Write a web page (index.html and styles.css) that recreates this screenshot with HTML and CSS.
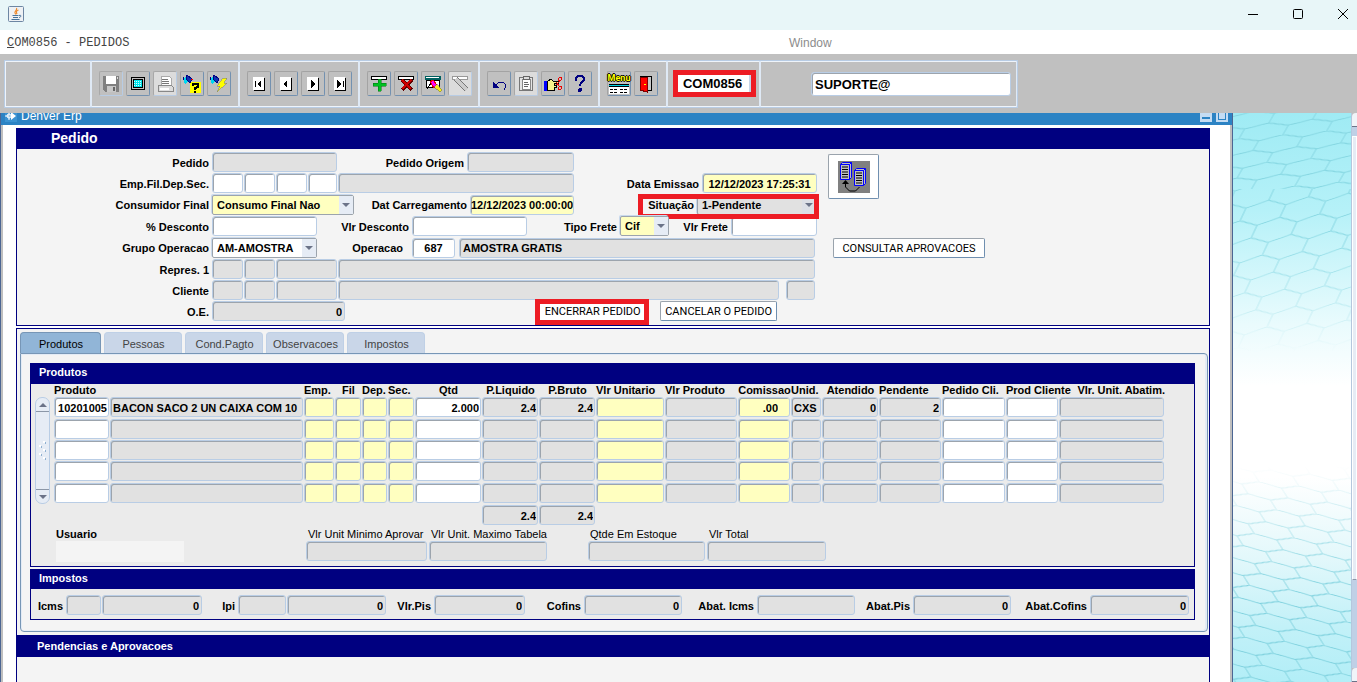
FILE: index.html
```html
<!DOCTYPE html>
<html lang="pt-BR">
<head>
  <meta charset="UTF-8">
  <meta name="viewport" content="width=device-width, initial-scale=1.0">
  <title>COM0856 - PEDIDOS</title>
  <link rel="stylesheet" href="styles.css">
</head>
<body>
  <header class="titlebar">
    <svg class="java-icon" width="16" height="16" viewBox="0 0 16 16">
      <rect x=".5" y=".5" width="15" height="15" rx="1" fill="#eef1f4" stroke="#6d86a3"/>
      <path d="M8.500 2C10 4 6 5 7 7l1 1.500M10.500 4C8 5 8 6 9 8" fill="none" stroke="#ee8a2c" stroke-width="1.200"/>
      <path d="M4.500 9.500h6M5 11.500h5M3.500 13.500h8M11 9.500c3-1 2 2 0 2" fill="none" stroke="#47739b"/>
    </svg>
    <div class="window-buttons">
      <button aria-label="Minimizar"><svg width="10" height="10"><path d="M0 5.5h10" stroke="#000"/></svg></button>
      <button aria-label="Maximizar"><svg width="10" height="10"><rect x=".5" y=".5" width="9" height="9" rx="1" fill="none" stroke="#000"/></svg></button>
      <button aria-label="Fechar"><svg width="10" height="10"><path d="M0 0l10 10M10 0L0 10" stroke="#000"/></svg></button>
    </div>
  </header>

  <nav class="menubar">
    <a class="menu-form" href="#"><u>C</u>OM0856 - PEDIDOS</a>
    <a class="menu-window" href="#">Window</a>
  </nav>

  <div class="toolbar">
    <div class="tool-strip">
      <div class="tool-group group-empty"></div>

      <div class="tool-group group-file">
        <button class="tool off" aria-label="Salvar"><svg viewBox="0 0 18 18">
          <path d="M1 1h16v16H3l-2-2z" fill="#808080"/><path d="M4 1h10v8H4z" fill="#fff"/><path d="M5 11h9v6H5z" fill="#c8c8c8"/><path d="M11 12h2v4h-2z" fill="#666"/><path d="M15 2h1v2h-1z" fill="#ddd"/>
        </svg></button>
        <button class="tool" aria-label="Tela"><svg viewBox="0 0 18 18">
          <rect x="2" y="2" width="14" height="13" rx="1" fill="#000"/><path d="M3 3h12v11H3z" fill="#c0c0c0"/><path d="M4 4h10v9H4z" fill="#000"/><path d="M5 5h8v7H5z" fill="#00e4ec"/><path d="M5 6.500h8M5 8.500h8M5 10.500h8" stroke="#d8ffff" stroke-dasharray="1 1"/>
        </svg></button>
        <button class="tool off light" aria-label="Imprimir"><svg viewBox="0 0 18 18">
          <path d="M5 1h8l2 2v7H5z" fill="#fff" stroke="#aaa"/><path d="M6 4h6M6 6h7M6 8h7" stroke="#777"/><path d="M2 10h13l2 2v4H2z" fill="#ddd" stroke="#888"/><path d="M4 13h9v2H4z" fill="#fff"/>
        </svg></button>
        <button class="tool" aria-label="Entrar consulta"><svg viewBox="0 0 18 18">
          <path d="M7 7h11v11H7z" fill="#ff0"/><path d="M0 3l3-1 3 4-4 3z" fill="#00d8f0"/><path d="M4 0l5 4-2 4-4-4zM1 2l-1 3" fill="#1030b0" stroke="#000080"/><path d="M8 5l2-1" stroke="#e00"/><path d="M10 11V9h5v3l-3 1v2M12 16v2" fill="none" stroke="#000" stroke-width="2"/>
        </svg></button>
        <button class="tool" aria-label="Executar consulta"><svg viewBox="0 0 18 18">
          <path d="M0 3l3-1 3 4-4 3z" fill="#00d8f0"/><path d="M4 0l5 4-2 4-4-4zM1 2l-1 3" fill="#1030b0" stroke="#000080"/><path d="M13 3h4l-3 5h3l-10 9 3-6H7z" fill="#ff0" stroke="#777" stroke-width=".5"/>
        </svg></button>
      </div>

      <div class="tool-group group-records">
        <button class="tool" aria-label="Primeiro"><svg viewBox="0 0 18 18">
          <path d="M4 3h11v13H4z" fill="#000"/><path d="M3 2h11v13H3z" fill="#fff"/><path d="M5 6h1v6H5zM11 5v8L7 9z"/>
        </svg></button>
        <button class="tool" aria-label="Anterior"><svg viewBox="0 0 18 18">
          <path d="M4 3h11v13H4z" fill="#000"/><path d="M3 2h11v13H3z" fill="#fff"/><path d="M10 5v8L6 9z"/>
        </svg></button>
        <button class="tool" aria-label="Proximo"><svg viewBox="0 0 18 18">
          <path d="M4 3h11v13H4z" fill="#000"/><path d="M3 2h11v13H3z" fill="#fff"/><path d="M7 5v8l4-4z"/>
        </svg></button>
        <button class="tool" aria-label="Ultimo"><svg viewBox="0 0 18 18">
          <path d="M4 3h11v13H4z" fill="#000"/><path d="M3 2h11v13H3z" fill="#fff"/><path d="M12 6h1v6h-1zM6 5v8l4-4z"/>
        </svg></button>
      </div>

      <div class="tool-group group-edit">
        <button class="tool" aria-label="Inserir"><svg viewBox="0 0 18 18">
          <path d="M1.500 1.500h15v3h-15z" fill="#fff" stroke="#000"/><path d="M8 4h3v4h5v3h-5v5H8v-5H3V8h5z" fill="#00c020" stroke="#007010" stroke-width=".5"/>
        </svg></button>
        <button class="tool" aria-label="Excluir"><svg viewBox="0 0 18 18">
          <path d="M1.500 1.500h15v3h-15z" fill="#fff" stroke="#000"/><path d="M5 5l10 10M15 5L5 15" stroke="#600000" stroke-width="4"/><path d="M5 5l9 9M14 5l-9 9" stroke="#d00000" stroke-width="2"/>
        </svg></button>
        <button class="tool" aria-label="Limpar"><svg viewBox="0 0 18 18">
          <path d="M1 1h16v4H1z" fill="#006060"/><path d="M2.500 5.500h13v7h-13z" fill="#fff" stroke="#000"/><path d="M2 2.500h13" stroke="#fff"/><path d="M6 7l3-2 4 5-3 3z" fill="#f0f" stroke="#e00"/><path d="M3 14l4-6" stroke="#000"/><path d="M10 12l3-3 5 6-2 2z" fill="#f4ee20" stroke="#555" stroke-width=".5"/>
        </svg></button>
        <button class="tool off light" aria-label="Editar"><svg viewBox="0 0 18 18">
          <path d="M1.500 1.500h15v3h-15z" fill="#fff" stroke="#999"/><path d="M5 4l11 11" stroke="#777" stroke-width="5"/><path d="M5 4l11 11" stroke="#ccc" stroke-width="3"/>
        </svg></button>
      </div>

      <div class="tool-group group-tools">
        <button class="tool" aria-label="Desfazer"><svg viewBox="0 0 18 18">
          <path d="M6 10l3-3h4l2 2v4l-1 2" fill="none" stroke="#000080"/><path d="M3 7v6h6z" fill="#000080"/>
        </svg></button>
        <button class="tool off light" aria-label="Colar"><svg viewBox="0 0 18 18">
          <rect x="2.500" y="2.500" width="13" height="13" rx="1" fill="#e4e4e4" stroke="#777"/><path d="M5 4h8v10H5z" fill="#fff" stroke="#888"/><path d="M6 1h6v3H6z" fill="#ddd" stroke="#666"/><path d="M7 7h4M7 9h5M7 11h4" stroke="#666"/>
        </svg></button>
        <button class="tool" aria-label="Recortar"><svg viewBox="0 0 18 18">
          <path d="M0 6h3v10H0z" fill="#00f"/><path d="M3 7l4-3 2 2h5v2h-4v2h2v2h-2v3H3z" fill="#f8f08c" stroke="#000"/><path d="M12 10l4-4M12 7l4 5" stroke="#e00"/><circle cx="16" cy="4" r="1.500" fill="none" stroke="#e00"/><circle cx="16" cy="13" r="1.500" fill="none" stroke="#e00"/>
        </svg></button>
        <button class="tool" aria-label="Ajuda"><svg viewBox="0 0 18 18">
          <path d="M5 6V4c0-4 8-4 8 0 0 3-4 3-4 7" fill="none" stroke="#000080" stroke-width="2"/><circle cx="9" cy="15" r="2" fill="#000080"/>
        </svg></button>
      </div>

      <div class="tool-group group-exit">
        <button class="tool menu-tool" aria-label="Menu">
          <span class="menu-word">Menu</span>
          <svg viewBox="0 0 20 10"><path d="M0 0h20v10H0z" fill="#fff"/><path d="M0 .5h20" stroke="#000"/><path d="M0 1.500h20" stroke="#00d0e0"/><path d="M0 2.500h20" stroke="#000"/><path d="M1 5.500h7M11 5.500h7M1 8.500h7M11 8.500h7" stroke="#000" stroke-dasharray="3 1"/></svg>
        </button>
        <button class="tool" aria-label="Sair"><svg viewBox="0 0 18 18">
          <path d="M3.500 1.500h11v14h-11z" fill="#c8c8c8" stroke="#000"/><path d="M3 2h7v15l-7-2z" fill="#f00" stroke="#800000"/><path d="M7 9h2v1H7z" fill="#ff0"/>
        </svg></button>
      </div>

      <div class="tool-group group-code">
        <span class="marked"><input class="code-box" aria-label="Programa" value="COM0856"></span>
      </div>
      <div class="tool-group group-user">
        <input class="field user-box" aria-label="Usuario conectado" value="SUPORTE@">
      </div>
    </div>
  </div>

  <main class="workspace">
    <div class="mdi-window">
      <div class="mdi-title">
        <svg class="mdi-icon" width="12" height="12" viewBox="0 0 12 12"><path d="M6 2l5 4-5 4z" fill="#fff"/><circle cx="4" cy="6" r="2" fill="none" stroke="#fff"/><path d="M0 6h4M4 2v8" stroke="#fff"/></svg>
        <span>Denver Erp</span>
        <div class="mdi-buttons">
          <button aria-label="Minimizar janela"><svg width="12" height="12"><path d="M2 8h8" stroke="#2c83c4" stroke-width="2"/></svg></button>
          <button aria-label="Restaurar janela"><svg width="12" height="12"><rect x="2.500" y="1.500" width="7" height="8" fill="none" stroke="#2c83c4"/></svg></button>
        </div>
      </div>

      <div class="mdi-content">
        <section class="panel order">
          <h1>Pedido</h1>
          <div class="order-body">
            <form class="order-form">
              <div class="row row-pedido">
                <label for="pedido">Pedido</label>
                <input class="field off" id="pedido">
                <label for="origem">Pedido Origem</label>
                <input class="field off" id="origem">
              </div>
              <div class="row row-empresa">
                <label for="emp">Emp.Fil.Dep.Sec.</label>
                <input class="field" id="emp">
                <input class="field" aria-label="Fil">
                <input class="field" aria-label="Dep">
                <input class="field" aria-label="Sec">
                <input class="field off" aria-label="Nome da empresa">
                <label for="emissao">Data Emissao</label>
                <input class="field required center" id="emissao" value="12/12/2023 17:25:31">
              </div>
              <div class="row row-consumidor">
                <label for="consumidor">Consumidor Final</label>
                <span class="select required"><select id="consumidor"><option>Consumo Final Nao</option></select></span>
                <label for="carregamento">Dat Carregamento</label>
                <input class="field required center" id="carregamento" value="12/12/2023 00:00:00">
                <div class="situacao">
                  <label for="situacao">Situação</label>
                  <span class="select off"><select id="situacao"><option>1-Pendente</option></select></span>
                </div>
              </div>
              <div class="row row-desconto">
                <label for="desconto">% Desconto</label>
                <input class="field" id="desconto">
                <label for="vlr-desconto">Vlr Desconto</label>
                <input class="field" id="vlr-desconto">
                <label for="tipo-frete">Tipo Frete</label>
                <span class="select required"><select id="tipo-frete"><option>Cif</option></select></span>
                <label for="vlr-frete">Vlr Frete</label>
                <input class="field" id="vlr-frete">
              </div>
              <div class="row row-operacao">
                <label for="grupo">Grupo Operacao</label>
                <span class="select"><select id="grupo"><option>AM-AMOSTRA</option></select></span>
                <label for="operacao">Operacao</label>
                <input class="field center" id="operacao" value="687">
                <input class="field off" aria-label="Descricao da operacao" value="AMOSTRA GRATIS">
              </div>
              <div class="row row-repres">
                <label for="repres">Repres. 1</label>
                <input class="field off" id="repres">
                <input class="field off" aria-label="Repres. fil">
                <input class="field off" aria-label="Repres. codigo">
                <input class="field off" aria-label="Repres. nome">
              </div>
              <div class="row row-cliente">
                <label for="cliente">Cliente</label>
                <input class="field off" id="cliente">
                <input class="field off" aria-label="Cliente fil">
                <input class="field off" aria-label="Cliente codigo">
                <input class="field off" aria-label="Cliente nome">
                <input class="field off uf" aria-label="UF">
              </div>
              <div class="row row-oe">
                <label for="oe">O.E.</label>
                <input class="field off num" id="oe" value="0">
                <div class="order-buttons">
                  <span class="marked-button"><button type="button" class="btn">ENCERRAR PEDIDO</button></span>
                  <button type="button" class="btn">CANCELAR O PEDIDO</button>
                </div>
              </div>
            </form>

            <div class="order-actions">
              <button class="btn copy-btn" aria-label="Copiar pedido">
                <svg width="32" height="32" viewBox="0 0 32 32">
                  <path d="M0 0h32v32H0z" fill="#808080"/>
                  <path d="M2.500 3.500l2-2h9v15l-2 2h-9z" fill="#c0c0c0" stroke="#00f"/>
                  <path d="M11.500 3.500v15M11.500 3.500l2-2M2.500 3.500h9" stroke="#00f"/>
                  <path d="M4 6h6M4 8.500h6M4 11h6M4 13.500h6M4 16h6" stroke="#000"/>
                  <path d="M16.500 9.500l2-2h9v15l-2 2h-9z" fill="#c0c0c0" stroke="#00f"/>
                  <path d="M25.500 9.500v15M25.500 9.500l2-2M16.500 9.500h9" stroke="#00f"/>
                  <path d="M18 12h6M18 14.500h6M18 17h6M18 19.500h6M18 22h6" stroke="#000"/>
                  <path d="M7.500 21v5l4 4h6l4-4" fill="none" stroke="#000"/>
                  <path d="M4 23l3.500-4 3.500 4z"/>
                </svg>
              </button>
              <button class="btn consult-btn">CONSULTAR APROVACOES</button>
            </div>
          </div>
        </section>

        <section class="panel details">
          <div class="tabs" role="tablist">
            <button class="tab active" role="tab">Produtos</button>
            <button class="tab" role="tab">Pessoas</button>
            <button class="tab" role="tab">Cond.Pagto</button>
            <button class="tab" role="tab">Observacoes</button>
            <button class="tab" role="tab">Impostos</button>
          </div>

          <div class="tab-pane">
            <section class="panel products">
              <h2>Produtos</h2>
              <div class="grid-area">
                <div class="scroller">
                  <span class="arrow up"></span>
                  <svg width="9" height="20"><path d="M5 1h2M1 5h2M5 9h2M1 13h2M5 17h2" stroke="#fff" stroke-width="2"/><path d="M7 2h1M3 6h1M7 10h1M3 14h1M7 18h1" stroke="#8fb0d0" stroke-width="2"/></svg>
                  <span class="arrow down"></span>
                </div>
                <table class="items">
                  <colgroup>
                    <col class="w-produto"><col class="w-descricao"><col class="w-emp"><col class="w-fil"><col class="w-dep"><col class="w-fil">
                    <col class="w-qtd"><col class="w-peso"><col class="w-peso"><col class="w-unitario"><col class="w-valor"><col class="w-comissao">
                    <col class="w-emp"><col class="w-peso"><col class="w-pendente"><col class="w-pedcli"><col class="w-comissao"><col class="w-abatim">
                  </colgroup>
                  <thead>
                    <tr>
                      <th>Produto</th><th></th><th>Emp.</th><th class="center">Fil</th><th>Dep.</th><th>Sec.</th>
                      <th class="center">Qtd</th><th class="center">P.Liquido</th><th class="center">P.Bruto</th>
                      <th>Vlr Unitario</th><th>Vlr Produto</th><th class="center">Comissao</th><th>Unid.</th>
                      <th class="center">Atendido</th><th>Pendente</th><th>Pedido Cli.</th><th>Prod Cliente</th><th class="end">Vlr. Unit. Abatim.</th>
                    </tr>
                  </thead>
                  <tbody id="items"></tbody>
                  <tfoot>
                    <tr>
                      <td colspan="7"></td>
                      <td><input class="field off num" aria-label="Total P.Liquido" value="2.4"></td>
                      <td><input class="field off num" aria-label="Total P.Bruto" value="2.4"></td>
                      <td colspan="9"></td>
                    </tr>
                  </tfoot>
                </table>
              </div>

              <div class="summary">
                <div><strong>Usuario</strong><output class="user-name"></output></div>
                <div><label for="minimo">Vlr Unit Minimo Aprovar</label><input class="field off" id="minimo"></div>
                <div><label for="maximo">Vlr Unit. Maximo Tabela</label><input class="field off" id="maximo"></div>
                <div class="stock"><label for="estoque">Qtde Em Estoque</label><input class="field off" id="estoque"></div>
                <div><label for="total">Vlr Total</label><input class="field off" id="total"></div>
              </div>
            </section>

            <section class="panel taxes">
              <h2>Impostos</h2>
              <div class="tax-row">
                <label for="icms">Icms</label>
                <input class="field off" id="icms">
                <input class="field off num" aria-label="Valor Icms" value="0">
                <label for="ipi">Ipi</label>
                <input class="field off" id="ipi">
                <input class="field off num" aria-label="Valor Ipi" value="0">
                <label for="pis">Vlr.Pis</label>
                <input class="field off num" id="pis" value="0">
                <label for="cofins">Cofins</label>
                <input class="field off num" id="cofins" value="0">
                <label for="abat-icms">Abat. Icms</label>
                <input class="field off num" id="abat-icms">
                <label for="abat-pis">Abat.Pis</label>
                <input class="field off num" id="abat-pis" value="0">
                <label for="abat-cofins">Abat.Cofins</label>
                <input class="field off num" id="abat-cofins" value="0">
              </div>
            </section>
          </div>

          <h2 class="pending">Pendencias e Aprovacoes</h2>
        </section>
      </div>
    </div>

    <svg class="wallpaper" viewBox="0 0 118 569" preserveAspectRatio="none">
      <defs>
        <linearGradient id="sky" x1="0" y1="0" x2="0" y2="1">
          <stop offset="0" stop-color="#9febf4"/>
          <stop offset=".17" stop-color="#b5f1f8"/>
          <stop offset=".37" stop-color="#e9fbfd"/>
          <stop offset=".48" stop-color="#fff"/>
          <stop offset=".64" stop-color="#fff"/>
          <stop offset=".78" stop-color="#e3f8fb"/>
          <stop offset=".9" stop-color="#c3f1f8"/>
          <stop offset="1" stop-color="#b2eef7"/>
        </linearGradient>
        <linearGradient id="fade" x1="0" y1="0" x2="0" y2="1">
          <stop offset="0" stop-color="#fff"/>
          <stop offset=".2" stop-color="#fff"/>
          <stop offset=".42" stop-color="#000"/>
          <stop offset=".62" stop-color="#000"/>
          <stop offset=".85" stop-color="#fff"/>
          <stop offset="1" stop-color="#fff"/>
        </linearGradient>
        <mask id="fade-mask"><rect width="118" height="569" fill="url(#fade)"/></mask>
        <pattern id="hex-far" width="44" height="26" patternUnits="userSpaceOnUse" patternTransform="rotate(-5) skewX(-35)">
          <path d="M0 4L22 0L44 4M0 4v9L22 17L44 13V4M22 17v9M22 0v-1" fill="none" stroke="#85d6e1"/>
        </pattern>
        <pattern id="hex-close" width="40" height="36" patternUnits="userSpaceOnUse" patternTransform="rotate(-5) skewX(-30)">
          <path d="M0 6L20 0L40 6M0 6v12L20 24L40 18V6M20 24v12" fill="none" stroke="#85d6e1"/>
        </pattern>
        <pattern id="hex-low" width="40" height="26" patternUnits="userSpaceOnUse" patternTransform="rotate(6) skewX(38)">
          <path d="M0 4L20 0L40 4M0 4v9L20 17L40 13V4M20 17v9" fill="none" stroke="#7fd1de"/>
        </pattern>
      </defs>
      <rect width="118" height="569" fill="url(#sky)"/>
      <g mask="url(#fade-mask)">
        <rect width="118" height="76" fill="url(#hex-far)"/>
        <rect y="76" width="118" height="170" fill="url(#hex-close)"/>
        <rect y="340" width="118" height="229" fill="url(#hex-low)"/>
      </g>
    </svg>

    <div class="page-scroll">
      <span class="page-scroll-button"></span>
      <span class="page-scroll-gap"></span>
      <span class="page-scroll-thumb"></span>
      <span class="page-scroll-track"></span>
      <span class="page-scroll-button"></span>
    </div>
  </main>

  <script>
    // Item grid columns: name, style, value of the first record
    const columns = [
      ["Produto", "num", "10201005"],
      ["Descricao", "off", "BACON SACO 2 UN CAIXA COM 10"],
      ["Emp.", "required", ""],
      ["Fil", "required", ""],
      ["Dep.", "required", ""],
      ["Sec.", "required", ""],
      ["Qtd", "num", "2.000"],
      ["P.Liquido", "off num", "2.4"],
      ["P.Bruto", "off num", "2.4"],
      ["Vlr Unitario", "required", ""],
      ["Vlr Produto", "off", ""],
      ["Comissao", "required percent", ".00"],
      ["Unid.", "off", "CXS"],
      ["Atendido", "off num", "0"],
      ["Pendente", "off num", "2"],
      ["Pedido Cli.", "", ""],
      ["Prod Cliente", "", ""],
      ["Vlr. Unit. Abatim.", "off", ""]
    ];

    const body = document.getElementById("items");
    for (let i = 0; i < 5; i++) {
      const row = body.insertRow();
      columns.forEach(([name, style, value]) => {
        const input = document.createElement("input");
        input.className = "field " + style;
        input.setAttribute("aria-label", name + " " + (i + 1));
        input.value = i === 0 ? value : "";
        row.insertCell().appendChild(input);
      });
    }
  </script>
</body>
</html>
```

FILE: styles.css
```css
* {
  margin: 0;
  padding: 0;
  box-sizing: border-box;
}

body {
  display: flex;
  flex-direction: column;
  height: 100vh;
  overflow: hidden;
  background: #c0c0c0;
  color: #000;
  font-family: "Liberation Sans", Arial, sans-serif;
  font-size: 11px;
}

input, select, button {
  font: inherit;
  color: inherit;
}

button {
  border: none;
  background: none;
}

/* Window title */
.titlebar {
  display: flex;
  flex: none;
  justify-content: space-between;
  align-items: center;
  height: 30px;
  padding: 0 9px 2px 8px;
  background: #e8f6f8;
}

.window-buttons {
  display: flex;
  gap: 35px;
}

.window-buttons button,
.window-buttons svg {
  display: block;
}

.menubar {
  display: flex;
  flex: none;
  align-items: center;
  height: 24px;
  padding: 2px 0 0 7px;
  background: #fff;
}

.menubar a {
  color: #444;
  text-decoration: none;
}

.menubar .menu-form {
  width: 782px;
  font-family: "Liberation Mono", monospace;
  font-size: 12px;
}

.menubar .menu-window {
  color: #8c8c8c;
  font-size: 12px;
}

/* Toolbar */
.toolbar {
  display: flex;
  flex: none;
  height: 59px;
  padding: 6px 4px 5px;
}

.tool-strip {
  display: flex;
  border: 1px solid #b8cce4;
  box-shadow: inset 1px 1px #eef4fb, inset 0 -1px #eef4fb;
}

.tool-group {
  display: flex;
  align-items: center;
  gap: 3px;
  padding: 0 7px 1px;
  border-right: 2px solid #dfe9f5;
}

.tool-group:last-child {
  border-right-width: 1px;
}

.group-empty { width: 87px; }
.group-file { width: 148px; }
.group-records { width: 120px; }
.group-edit { width: 120px; }
.group-tools { width: 120px; }
.group-exit { width: 68px; }
.group-code { width: 93px; }
.group-user { width: 256px; padding: 0 5px 1px; justify-content: flex-end; }

.tool {
  display: flex;
  flex: none;
  flex-direction: column;
  align-items: center;
  justify-content: center;
  width: 24px;
  height: 25px;
  border: 1px solid;
  border-color: #a3a3a3 #7391b0 #7391b0 #a3a3a3;
  border-radius: 2px;
}

.tool.off {
  border-color: #a8a8a8 #b8cce4 #b8cce4 #a8a8a8;
}

.tool.light {
  background: #dcdcdc;
}

.tool svg {
  width: 18px;
  height: 18px;
  shape-rendering: crispEdges;
}

.tool.menu-tool svg {
  width: 20px;
  height: 10px;
}

.menu-word {
  height: 11px;
  color: #ff0;
  font-family: Roboto, sans-serif;
  font-size: 9px;
  font-weight: bold;
  line-height: 11px;
  text-shadow: 1px 0 #000, -1px 0 #000, 0 1px #000, 0 -1px #000;
}

.marked {
  display: flex;
  margin-left: -2px;
  border: 5px solid #ed1c24;
}

.code-box {
  width: 73px;
  height: 17px;
  padding-right: 2px;
  border: none;
  border-right: 2px solid #c5d5e8;
  background: #fff;
  font-size: 13px;
  font-weight: bold;
  text-align: center;
}

.tool-group .user-box {
  width: 200px;
  height: 24px;
  font-size: 13px;
}

/* Workspace */
.workspace {
  display: flex;
  flex: 1;
  min-height: 0;
  overflow: hidden;
}

.mdi-window {
  flex: 1;
  min-width: 0;
  margin-top: -9px;
  border-left: 1px solid #4c6693;
  border-right: 1px solid #4c6693;
  background: #fff;
}

.mdi-title {
  display: flex;
  align-items: center;
  gap: 4px;
  height: 21px;
  padding: 3px 4px 0;
  background: #2c83c4;
  color: #fff;
  font-size: 12px;
}

.mdi-icon {
  background: #3b93d2;
}

.mdi-buttons {
  display: flex;
  gap: 4px;
  margin-left: auto;
}

.mdi-buttons button,
.mdi-buttons svg {
  display: block;
}

.mdi-buttons button {
  background: #c4dcf3;
}

.mdi-content {
  padding: 3px 20px 0 13px;
  border-left: 2px solid #bfbfbf;
  border-right: 2px solid #bfbfbf;
}

/* Navy framed panels */
.panel {
  border: 1px solid #000080;
  border-top: none;
  background: #f4f4f4;
}

.panel h1,
.panel h2 {
  background: #000080;
  color: #fff;
  font-size: 11px;
  line-height: 19px;
}

.panel h1 {
  height: 21px;
  padding-left: 34px;
  font-size: 14px;
  line-height: 21px;
}

/* Fields */
.field {
  display: block;
  width: 100%;
  height: 20px;
  padding: 1px 2px 0 3px;
  border: 1px solid #b9cde5;
  border-radius: 3px;
  outline: none;
  background: #fff;
  box-shadow: inset 1px 1px #9ca4ad;
  font-weight: bold;
}

.field.off { background: #e1e1e1; }
.field.required { background: #ffffc0; }
.field.num { text-align: right; }
.center, .field.center { padding-left: 0; padding-right: 0; text-align: center; }

.select {
  position: relative;
  display: block;
  height: 20px;
  border: 1px solid #9ca4ad;
  border-radius: 2px;
  box-shadow: -1px -1px #c9d9ec;
  background: #fff;
}

.select.off { background: #e1e1e1; }
.select.required { background: #ffffc0; }

.select select {
  display: block;
  width: 100%;
  height: 100%;
  padding-left: 4px;
  border: none;
  background: none;
  appearance: none;
  font-weight: bold;
}

.select::before {
  content: "";
  position: absolute;
  top: 0;
  right: 0;
  bottom: 0;
  width: 14px;
  background: #e6ecf5;
}

.select.off::before {
  background: #dcdfe6;
}

.select::after {
  content: "";
  position: absolute;
  top: 7px;
  right: 3px;
  border: 4px solid transparent;
  border-top-color: #6b7388;
  border-bottom: none;
}

/* Order form */
.order-body {
  display: flex;
  padding: 3px 0 4px;
}

.order-form {
  display: flex;
  flex-direction: column;
  gap: 1px;
}

.row {
  display: grid;
  align-items: center;
  column-gap: 1px;
}

.row label,
.tax-row label {
  padding: 1px 2px 0 0;
  font-weight: bold;
  text-align: right;
  white-space: nowrap;
}

.row-pedido { grid-template-columns: 194px 125px 128px 107px; }
.row-empresa { grid-template-columns: 194px 31px 31px 31px 29px 236px 126px 115px; }
.row-consumidor { grid-template-columns: 194px 142px 114px 104px 242px; height: 21px; }
.row-desconto { grid-template-columns: 194px 105px 93px 115px 91px 49px 60px 86px; }
.row-operacao { grid-template-columns: 194px 105px 93px 46px 356px; height: 21px; }
.row-repres { grid-template-columns: 194px 31px 31px 61px 477px; }
.row-cliente { grid-template-columns: 194px 31px 31px 61px 441px 35px; }
.row-oe { grid-template-columns: 194px 133px 431px; }

.row .uf {
  justify-self: end;
  width: 29px;
}

#operacao {
  width: 43px;
}

.row label[for="operacao"] {
  padding-right: 8px;
}

.situacao {
  position: relative;
  display: grid;
  grid-template-columns: 121px 120px;
  align-items: center;
  column-gap: 1px;
}

/* Red callout round the order status */
.situacao::after {
  content: "";
  position: absolute;
  top: -1px;
  right: -2px;
  bottom: -4px;
  left: 63px;
  border: 5px solid #ed1c24;
  pointer-events: none;
}

.order-buttons {
  display: flex;
  justify-content: flex-end;
  gap: 13px;
}

.btn {
  height: 20px;
  padding: 0 4px;
  border: 1px solid;
  border-color: #9aa3ac #6f8fb0 #6f8fb0 #9aa3ac;
  border-radius: 2px;
  background: #fff;
  font-family: Roboto, "Liberation Sans", sans-serif;
  white-space: nowrap;
}

.marked-button {
  position: relative;
}

.marked-button .btn {
  width: 109px;
}

.marked-button::after {
  content: "";
  position: absolute;
  top: -2px;
  right: -2px;
  bottom: -4px;
  left: -3px;
  border: 5px solid #ed1c24;
  pointer-events: none;
}

.order-actions {
  display: flex;
  flex-direction: column;
  align-items: flex-start;
  gap: 39px;
  padding: 2px 0 0 11px;
}

.order-actions .copy-btn {
  width: 51px;
  height: 45px;
}

.copy-btn svg {
  display: block;
  margin: 0 auto;
}

.consult-btn {
  width: 152px;
  margin-left: 5px;
}

/* Details and tabs */
.details {
  margin-top: 2px;
  padding: 3px 1px 0 3px;
  border-top: 1px solid #000080;
  height: 400px;
}

.tabs {
  display: flex;
  gap: 3px;
}

.tab {
  width: 78px;
  height: 21px;
  padding: 2px 0 0 1px;
  border: 1px solid #bfd0e6;
  border-bottom: none;
  border-radius: 4px 4px 0 0;
  background: #c9d6e8;
  color: #444;
}

.tab.active {
  width: 81px;
  border-color: #7796b6;
  background: #91b5d7;
  color: #000;
}

.tab-pane {
  padding: 9px 12px 11px 9px;
  border: 1px solid #7796b6;
  border-radius: 0 4px 4px 4px;
  box-shadow: inset 1px 1px #e3ebf5, inset -2px -1px #e3ebf5;
}

.products,
.taxes {
  background: #ebebeb;
}

.tab-pane h2 {
  height: 20px;
  padding-left: 8px;
}

.tab-pane .products h2 {
  height: 21px;
}

.taxes {
  margin-top: 2px;
}

.details .pending {
  height: 22px;
  margin: 3px -1px 0 -3px;
  padding-left: 20px;
  line-height: 22px;
}

/* Item grid */
.grid-area {
  display: flex;
  gap: 4px;
  padding-left: 4px;
}

.scroller {
  display: flex;
  flex: none;
  flex-direction: column;
  align-items: center;
  justify-content: space-between;
  width: 15px;
  height: 107px;
  margin-top: 13px;
  border: 1px solid #b9cde5;
  border-radius: 7px;
  background: #e6ecf5;
}

.arrow {
  display: flex;
  align-items: center;
  justify-content: center;
  width: 100%;
  height: 14px;
}

.arrow::before {
  content: "";
  border: 4px solid transparent;
}

.arrow.up { border-bottom: 1px solid #8c97a8; }
.arrow.up::before { border-top: none; border-bottom-color: #6b7388; }
.arrow.down { border-top: 1px solid #8c97a8; }
.arrow.down::before { border-bottom: none; border-top-color: #6b7388; }

.items {
  width: 1111px;
  table-layout: fixed;
  border-collapse: collapse;
}

.w-produto { width: 56px; }
.w-descricao { width: 194px; }
.w-emp { width: 31px; }
.w-fil { width: 27px; }
.w-dep { width: 26px; }
.w-qtd { width: 67px; }
.w-peso { width: 57px; }
.w-unitario { width: 69px; }
.w-valor { width: 73px; }
.w-comissao { width: 53px; }
.w-pendente { width: 63px; }
.w-pedcli { width: 64px; }
.w-abatim { width: 106px; }

.items th {
  height: 13px;
  line-height: 13px;
  text-align: left;
  white-space: nowrap;
}

.items th.center { text-align: center; }
.items th.end { text-align: right; }

.items td {
  height: 21px;
  padding-right: 1px;
  vertical-align: top;
}

.items tbody tr:nth-child(3n + 1) td {
  height: 22px;
}

.items .field {
  padding: 1px 1px 0 2px;
}

.items .percent {
  padding-right: 11px;
  text-align: right;
}

.items tfoot td {
  padding-top: 1px;
}

/* Stock and price summary */
.summary {
  display: grid;
  grid-template-columns: 248px 121px 118px 37px 117px 119px;
  column-gap: 2px;
  padding: 3px 0 4px 25px;
}

.summary label,
.summary strong {
  display: block;
  padding-left: 2px;
  line-height: 13px;
  white-space: nowrap;
}

.summary strong {
  padding-left: 0;
}

.summary .stock {
  grid-column: 5;
}

.user-name {
  display: block;
  width: 128px;
  height: 21px;
  background: #f4f4f4;
}

/* Taxes */
.tax-row {
  display: grid;
  grid-template-columns: 34px 35px 100px 34px 48px 99px 46px 91px 57px 98px 73px 98px 56px 98px 77px 99px;
  align-items: center;
  column-gap: 1px;
  padding: 6px 0 4px;
}

/* Right side of the desktop */
.wallpaper {
  flex: none;
  width: 118px;
  height: 100%;
}

.page-scroll {
  display: flex;
  flex: none;
  flex-direction: column;
  width: 6px;
  border-left: 1px solid #b5c7dd;
}

.page-scroll-button {
  height: 14px;
  border-bottom: 1px solid #6b7388;
  border-radius: 4px 0 0 0;
  background: #f0f4f9;
}

.page-scroll-gap {
  height: 9px;
  background: #bfd0e6;
}

.page-scroll-thumb {
  flex: 1;
  border: 1px solid #fff;
  border-bottom-color: #8c97a8;
  background: #e6ecf5;
}

.page-scroll-track {
  height: 88px;
  background: #bfd0e6;
}
```
